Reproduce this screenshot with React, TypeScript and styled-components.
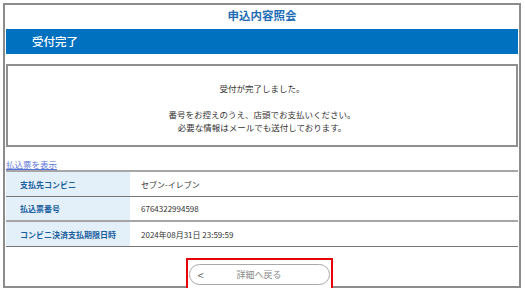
import styled, { createGlobalStyle } from "styled-components";

const GlobalStyle = createGlobalStyle`
  html, body {
    margin: 0;
    padding: 0;
    background: #fff;
  }
  body {
    padding: 3px 4px 0 3px;
    font-family: "Noto Sans CJK JP", "Noto Sans", sans-serif;
    color: #333;
  }
`;

const Frame = styled.div`
  border: 2px solid #8c8c8c;
  height: 285px;
  box-sizing: border-box;
  padding: 0 1px 0 1px;
  display: flex;
  flex-direction: column;
`;

const PageTitle = styled.h1`
  margin: 0;
  height: 24px;
  line-height: 20px;
  text-align: center;
  font-size: 11.5px;
  font-weight: 700;
  color: #1d6db4;
`;

const StatusBar = styled.div`
  background: #0071bf;
  color: #fff;
  height: 25px;
  line-height: 25px;
  padding-left: 26px;
  font-size: 11.5px;
  font-weight: 500;
`;

const MessageBox = styled.div`
  margin-top: 10px;
  height: 83px;
  box-sizing: border-box;
  border: 2px solid #8f8f8f;
  display: flex;
  flex-direction: column;
  align-items: center;
  padding-top: 16px;
  font-size: 8.5px;
  line-height: 13px;
  color: #333;
`;

const MessageLine = styled.p<{ $gap?: number }>`
  margin: ${(p) => p.$gap ?? 0}px 0 0;
`;

const SlipLink = styled.a`
  display: block;
  margin-top: 12px;
  font-size: 8.5px;
  line-height: 11px;
  color: #5a73d8;
  text-decoration: underline;
`;

const Table = styled.div`
  border-top: 2px solid #a6a6a6;
  display: flex;
  flex-direction: column;
`;

const Row = styled.div<{ $heavy?: boolean }>`
  display: grid;
  grid-template-columns: 124px 1fr;
  height: 25px;
  box-sizing: border-box;
  border-bottom: ${(p) => (p.$heavy ? "2px solid #a6a6a6" : "1px solid #777")};
  font-size: 8px;
`;

const Label = styled.div`
  background: #e3f0fa;
  color: #1b5f9e;
  font-weight: 700;
  display: flex;
  align-items: center;
  padding-left: 14px;
`;

const Value = styled.div`
  display: flex;
  align-items: center;
  padding-left: 11px;
  color: #333;
`;

const Footer = styled.div`
  display: flex;
  justify-content: center;
  margin-top: 11px;
  margin-bottom: -7px;
  padding-right: 6px;
`;

const Highlight = styled.div`
  border: 2px solid #e8000b;
  padding: 4px 1px 5px 1px;
  background: #fff;
  position: relative;
  z-index: 1;
`;

const BackButton = styled.button`
  width: 141px;
  height: 21px;
  box-sizing: border-box;
  border: 1px solid #a9a9a9;
  border-radius: 11px;
  background: #fff;
  display: flex;
  align-items: center;
  padding: 0 8px;
  font-family: inherit;
  font-size: 9px;
  color: #8a8a8a;
  cursor: pointer;
`;

const Chevron = styled.span`
  font-size: 11px;
  color: #666;
  width: 14px;
  text-align: left;
`;

const ButtonText = styled.span`
  flex: 1;
  text-align: center;
  padding-right: 14px;
`;

const rows = [
  { label: "支払先コンビニ", value: "セブン-イレブン" },
  { label: "払込票番号", value: "6764322994598" },
  { label: "コンビニ決済支払期限日時", value: "2024年08月31日 23:59:59" },
];

export default function App() {
  return (
    <>
      <GlobalStyle />
      <Frame>
        <PageTitle>申込内容照会</PageTitle>
        <StatusBar>受付完了</StatusBar>
        <MessageBox>
          <MessageLine>受付が完了しました。</MessageLine>
          <MessageLine $gap={13}>番号をお控えのうえ、店頭でお支払いください。</MessageLine>
          <MessageLine>必要な情報はメールでも送付しております。</MessageLine>
        </MessageBox>
        <SlipLink href="#">払込票を表示</SlipLink>
        <Table>
          {rows.map((r, i) => (
            <Row key={r.label} $heavy={i === 1}>
              <Label>{r.label}</Label>
              <Value>{r.value}</Value>
            </Row>
          ))}
        </Table>
        <Footer>
          <Highlight>
            <BackButton>
              <Chevron>&lt;</Chevron>
              <ButtonText>詳細へ戻る</ButtonText>
            </BackButton>
          </Highlight>
        </Footer>
      </Frame>
    </>
  );
}
